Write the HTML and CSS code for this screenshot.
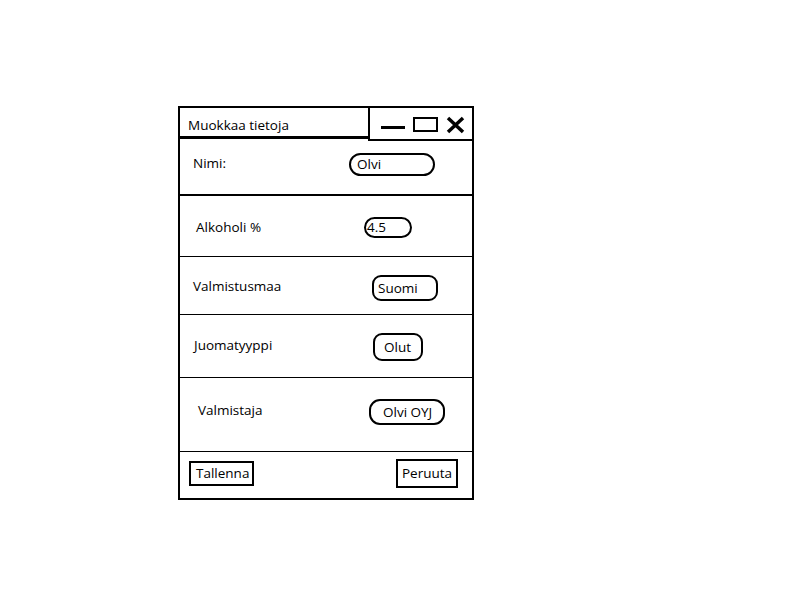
FILE: index.html
```html
<!DOCTYPE html>
<html lang="fi">
<head>
<meta charset="utf-8">
<title>Muokkaa tietoja</title>
<link rel="stylesheet" href="styles.css">
</head>
<body>
<div class="window">
  <div class="titlebar">
    <div class="title">Muokkaa tietoja</div>
    <div class="controls">
      <svg width="104" height="33" viewBox="0 0 104 33">
        <rect x="13" y="18" width="24" height="3" fill="#000"/>
        <rect x="46" y="10" width="23" height="13" fill="none" stroke="#000" stroke-width="2"/>
        <path d="M80 10 L95 24 M95 10 L80 24" stroke="#000" stroke-width="3.5" fill="none"/>
      </svg>
    </div>
  </div>
  <div class="row row-nimi">
    <span class="label">Nimi:</span>
    <span class="field">Olvi</span>
  </div>
  <div class="row row-alko">
    <span class="label">Alkoholi %</span>
    <span class="field">4.5</span>
  </div>
  <div class="row row-maa">
    <span class="label">Valmistusmaa</span>
    <span class="field">Suomi</span>
  </div>
  <div class="row row-tyyppi">
    <span class="label">Juomatyyppi</span>
    <span class="field">Olut</span>
  </div>
  <div class="row row-valm">
    <span class="label">Valmistaja</span>
    <span class="field">Olvi OYJ</span>
  </div>
  <div class="actions">
    <span class="btn btn-save">Tallenna</span>
    <span class="btn btn-cancel">Peruuta</span>
  </div>
</div>
</body>
</html>
```
FILE: styles.css
```css
html, body {
  margin: 0;
  padding: 0;
  background: #fff;
}
body {
  font-family: "Open Sans", "Liberation Sans", Arial, sans-serif;
  font-size: 13.5px;
  font-weight: 500;
  line-height: 18px;
  color: #000;
}
.window {
  box-sizing: border-box;
  width: 296px;
  height: 394px;
  margin: 106px 0 0 178px;
  border: 2px solid #000;
  display: flex;
  flex-direction: column;
}
.titlebar {
  display: flex;
  align-items: flex-start;
  height: 33px;
  flex: none;
}
.title {
  flex: 1;
  box-sizing: border-box;
  height: 31px;
  padding: 8px 0 0 8px;
  border-bottom: 3px solid #000;
}
.controls {
  box-sizing: border-box;
  width: 104px;
  height: 33px;
  border-left: 2px solid #000;
  border-bottom: 2px solid #000;
  margin-left: -2px;
}
.controls svg {
  display: block;
  margin-left: -2px;
}
.row {
  display: flex;
  align-items: flex-start;
  box-sizing: border-box;
  border-bottom: 1px solid #000;
  flex: none;
  height: var(--h);
}
.label {
  flex: none;
  margin-top: var(--lt);
  margin-left: var(--ll);
  width: var(--lw);
}
.field {
  flex: none;
  box-sizing: border-box;
  border: 2px solid #000;
  border-radius: var(--r);
  margin-top: var(--ft);
  width: var(--fw);
  height: var(--fh);
  line-height: calc(var(--fh) - 4px);
  padding-left: var(--fp);
  white-space: nowrap;
}
.row-nimi {
  --h: 55px;
  border-bottom-width: 2px;
  --lt: 13px; --ll: 13px; --lw: 156px;
  --ft: 12px; --fw: 86px; --fh: 23px; --fp: 6px; --r: 12px;
}
.row-alko {
  --h: 61px;
  --lt: 22px; --ll: 16px; --lw: 168px;
  --ft: 21px; --fw: 48px; --fh: 21px; --fp: 1px; --r: 11px;
}
.row-maa {
  --h: 58px;
  --lt: 20px; --ll: 13px; --lw: 179px;
  --ft: 18px; --fw: 66px; --fh: 26px; --fp: 4px; --r: 9px;
}
.row-tyyppi {
  --h: 63px;
  --lt: 21px; --ll: 14px; --lw: 179px;
  --ft: 18px; --fw: 50px; --fh: 28px; --fp: 9px; --r: 9px;
}
.row-valm {
  --h: 74px;
  --lt: 23px; --ll: 18px; --lw: 171px;
  --ft: 21px; --fw: 76px; --fh: 26px; --fp: 12px; --r: 11px;
}
.actions {
  flex: 1;
  display: flex;
  justify-content: space-between;
  align-items: flex-start;
  padding: 0 14px 0 9px;
}
.btn {
  box-sizing: border-box;
  border: 2px solid #000;
  white-space: nowrap;
}
.btn-save {
  margin-top: 9px;
  width: 65px;
  height: 25px;
  line-height: 21px;
  padding-left: 5px;
}
.btn-cancel {
  margin-top: 7px;
  width: 62px;
  height: 29px;
  line-height: 25px;
  padding-left: 4px;
}
```
